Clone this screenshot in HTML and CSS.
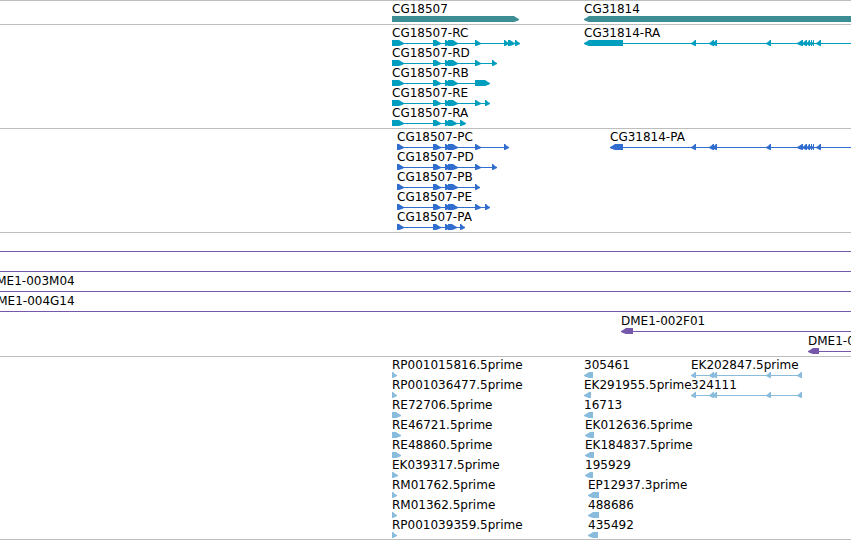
FILE: index.html
```html
<!DOCTYPE html>
<html lang="en">
<head>
  <meta charset="UTF-8">
  <meta name="viewport" content="width=device-width, initial-scale=1.0">
  <title>Genome tracks</title>
  <link rel="stylesheet" href="styles.css">
</head>
<body>

  <main class="browser">
    <section class="track gene" id="genes" aria-label="Genes"></section>
    <section class="track transcript" id="transcripts" aria-label="Transcripts"></section>
    <section class="track protein" id="proteins" aria-label="Proteins"></section>
    <section class="track clone" id="clones" aria-label="Clones"></section>
    <section class="track est" id="ests" aria-label="ESTs"></section>
  </main>

  <script src="tracks.js"></script>
</body>
</html>
```
FILE: styles.css
```css
* {
  margin: 0;
  padding: 0;
  box-sizing: border-box;
}

body {
  font-family: "DejaVu Sans", sans-serif;
  font-size: 12px;
  background-color: #fff;
  color: #000;
}

.browser {
  overflow: hidden;
  border-bottom: 1px solid #bdbdbd;
}

.track {
  border-top: 1px solid #bdbdbd;
  padding-bottom: 3px;
}

.track:last-child {
  padding-bottom: 2px;
}

/* every feature of a row shares the one cell, its start is the left margin */
.row {
  display: grid;
  grid-template-columns: minmax(0, 1fr);
  height: 20px;
}

.feature {
  grid-area: 1 / 1;
  white-space: nowrap;
}

.label {
  display: block;
  height: 15px;
  line-height: 16px;
}

.glyph {
  display: block;
  height: 6px;
  overflow: visible;
}

.gene .glyph { fill: #3d8e94; }
.transcript .glyph { fill: #009ebe; }
.protein .glyph { fill: #316dce; }
.clone .glyph { fill: #7558a9; }
.est .glyph { fill: #88bbdc; }
```
FILE: tracks.js
```js
// feature: [label, strand, exons, end of the line if it runs past the last exon]
var SVG = "http://www.w3.org/2000/svg";
var FAR = 4000;

var head = [[392, 404], [433, 441], [445, 451], [448, 458]];
var cdsHead = [[397, 404], [433, 441], [445, 451], [448, 458]];
var tail = [[691, 696], [709, 714], [712, 717], [766, 771], [797, 803],
            [802, 807], [806, 810], [809, 812], [811, 814], [816, 821]];
var estExons = [[691, 696], [709, 714], [712, 717], [766, 771], [797, 802]];

var tracks = {
  genes: [
    [["CG18507", 1, [[392, 519]]], ["CG31814", -1, [[584, FAR]]]]
  ],
  transcripts: [
    [["CG18507-RC", 1, head.concat([[475, 481], [504, 509], [508, 515], [515, 520]])],
     ["CG31814-RA", -1, [[584, 623]].concat(tail), FAR]],
    [["CG18507-RD", 1, head.concat([[475, 481], [492, 497]])]],
    [["CG18507-RB", 1, head.concat([[475, 490]])]],
    [["CG18507-RE", 1, head.concat([[475, 481], [485, 490]])]],
    [["CG18507-RA", 1, head.slice(0, 3).concat([[448, 457], [460, 466]])]]
  ],
  proteins: [
    [["CG18507-PC", 1, cdsHead.concat([[475, 481], [504, 509]])],
     ["CG31814-PA", -1, [[610, 623]].concat(tail), FAR]],
    [["CG18507-PD", 1, cdsHead.concat([[475, 481], [492, 497]])]],
    [["CG18507-PB", 1, cdsHead.concat([[475, 480]])]],
    [["CG18507-PE", 1, cdsHead.concat([[475, 481], [485, 490]])]],
    [["CG18507-PA", 1, cdsHead.slice(0, 3).concat([[448, 457], [460, 465]])]]
  ],
  clones: [
    [["", -1, [[-300, -288]], FAR]],
    [["", -1, [[-200, -188]], FAR]],
    [["DME1-003M04", -1, [[-13, -2]], FAR]],
    [["DME1-004G14", -1, [[-12, -2]], FAR]],
    [["DME1-002F01", -1, [[621, 633]], FAR]],
    [["DME1-001K19", -1, [[808, 819]], FAR]]
  ],
  ests: [
    [["RP001015816.5prime", 1, [[392, 397]]], ["305461", -1, [[584, 593]]], ["EK202847.5prime", -1, estExons]],
    [["RP001036477.5prime", 1, [[392, 397]]], ["EK291955.5prime", -1, [[584, 591]]], ["324111", -1, estExons]],
    [["RE72706.5prime", 1, [[392, 401]]], ["16713", -1, [[584, 593]]]],
    [["RE46721.5prime", 1, [[392, 401]]], ["EK012636.5prime", -1, [[585, 594]]]],
    [["RE48860.5prime", 1, [[392, 401]]], ["EK184837.5prime", -1, [[585, 594]]]],
    [["EK039317.5prime", 1, [[392, 398]]], ["195929", -1, [[585, 593]]]],
    [["RM01762.5prime", 1, [[392, 397]]], ["EP12937.3prime", -1, [[588, 599]]]],
    [["RM01362.5prime", 1, [[392, 397]]], ["488686", -1, [[588, 599]]]],
    [["RP001039359.5prime", 1, [[392, 397]]], ["435492", -1, [[588, 598]]]]
  ]
};

// block with a blunt point on the side of the strand
function exonPath(from, to, strand) {
  var tip = Math.min(to - from - 1, 5) * strand;
  var back = strand > 0 ? from : to;
  var front = strand > 0 ? to : from;
  return "M" + back + " 0H" + (front - tip) + "L" + (front - 2 * strand) + " 2L" + front + " 3V4L" +
    (front - 2 * strand) + " 5L" + (front - tip) + " 6H" + back + "Z";
}

function addPath(svg, d) {
  var path = document.createElementNS(SVG, "path");
  path.setAttribute("d", d);
  svg.appendChild(path);
}

function drawFeature(f) {
  var start = f[2][0][0];
  var end = f[3] || f[2][f[2].length - 1][1];

  var box = document.createElement("div");
  box.className = "feature";
  box.style.marginLeft = start + "px";

  var label = document.createElement("span");
  label.className = "label";
  label.textContent = f[0];
  box.appendChild(label);

  var svg = document.createElementNS(SVG, "svg");
  svg.setAttribute("class", "glyph");
  svg.setAttribute("width", end - start);
  svg.setAttribute("height", 6);

  if (f[2].length > 1 || f[3]) {
    addPath(svg, "M0 3H" + (end - start - 2) + "V4H0Z");
  }
  f[2].forEach(function (exon) {
    addPath(svg, exonPath(exon[0] - start, exon[1] - start, f[1]));
  });
  box.appendChild(svg);
  return box;
}

Object.keys(tracks).forEach(function (id) {
  var track = document.getElementById(id);
  tracks[id].forEach(function (features) {
    var row = document.createElement("div");
    row.className = "row";
    features.forEach(function (f) {
      row.appendChild(drawFeature(f));
    });
    track.appendChild(row);
  });
});
```
